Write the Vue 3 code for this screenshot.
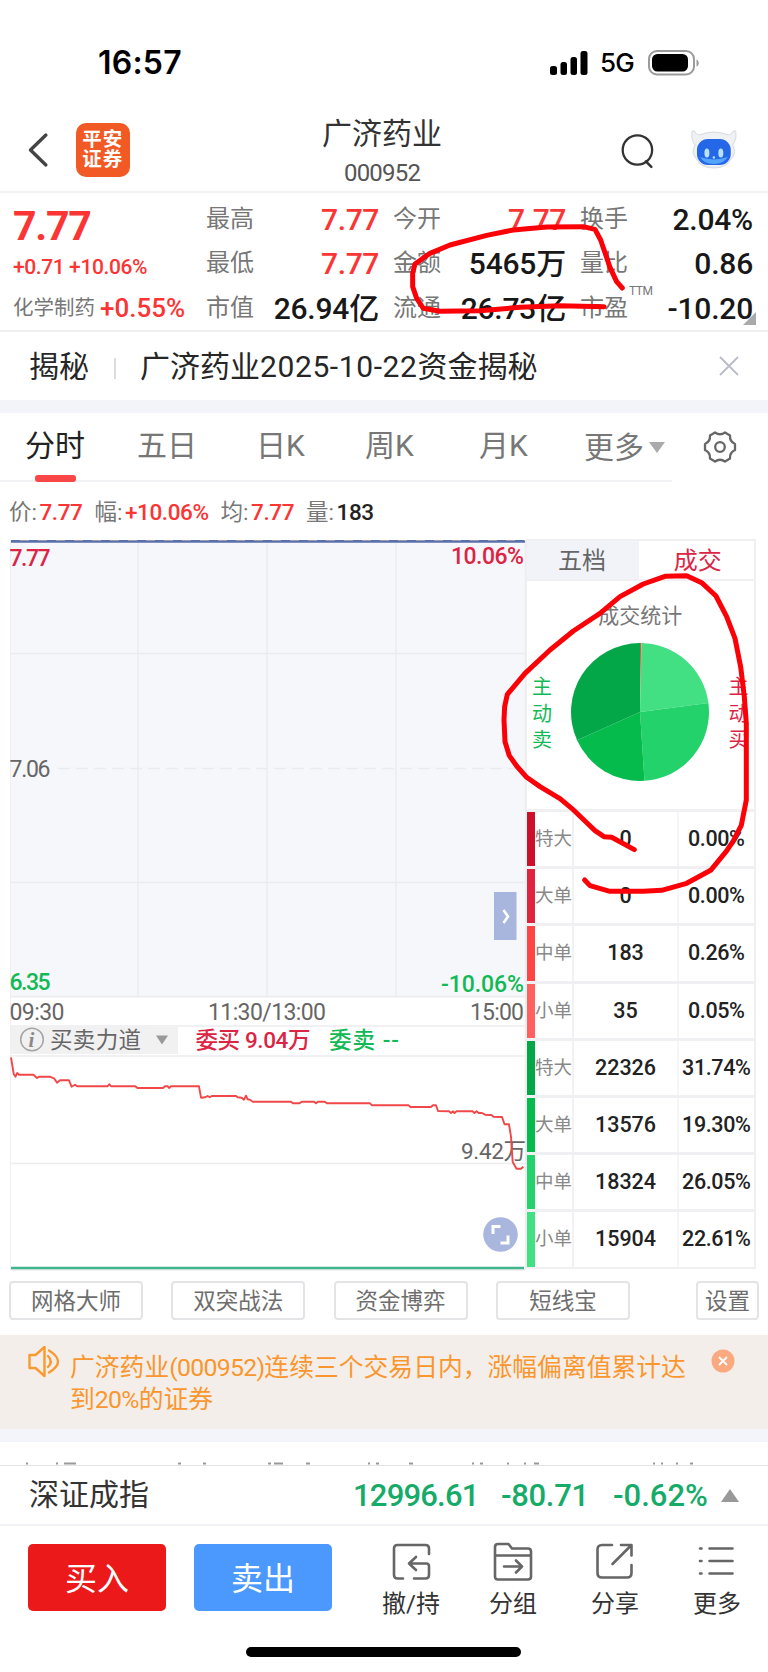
<template>
  <div class="page">
    <header class="status-bar">
      <span class="clock">16:57</span>
      <svg class="signal" width="38" height="24" viewBox="0 0 38 24">
        <rect x="0" y="15" width="7" height="9" rx="2.5" />
        <rect x="10.5" y="11" width="6.5" height="13" rx="2.5" />
        <rect x="20.5" y="6" width="6.5" height="18" rx="2.5" />
        <rect x="30.5" y="0" width="7" height="24" rx="2.5" />
      </svg>
      <span class="network">5G</span>
      <svg class="battery" width="52" height="26" viewBox="0 0 52 26">
        <rect x="1" y="1" width="45" height="23.5" rx="8" fill="none" stroke="#9a9a9a" stroke-width="2" />
        <rect x="4" y="4" width="36" height="17.5" rx="5.5" />
        <path d="M48.5 9.5c3 1 3 6 0 7z" fill="#9a9a9a" />
      </svg>
    </header>

    <nav class="nav-bar">
      <svg class="back" width="22" height="36" viewBox="0 0 22 36">
        <path d="M19 3L3.500 18L19 33" fill="none" stroke="#444" stroke-width="3.400" stroke-linecap="round" stroke-linejoin="round" />
      </svg>
      <div class="logo"><span>平安</span><span>证券</span></div>
      <div class="title">
        <div class="stock-name">广济药业</div>
        <div class="stock-code">000952</div>
      </div>
      <svg class="search" width="34" height="36" viewBox="0 0 34 36">
        <circle cx="16.500" cy="17" r="14.800" fill="none" stroke="#333" stroke-width="2.300" />
        <path d="M25 28.500L30.500 34" stroke="#333" stroke-width="2.600" stroke-linecap="round" />
      </svg>
      <svg class="robot" width="48" height="40" viewBox="0 0 48 40">
        <path d="M2 3q1-3 3 0q2 4 7 2q12-4 24 0q5 2 7-2q2-3 3 0q1 7-3 13q4 8-1 13q-5 10-18 10T6 29q-5-5-1-13Q1 10 2 3z" fill="#f0f1f4" stroke="#dcdee3" stroke-width="1.200" />
        <rect x="7" y="10" width="34" height="26" rx="11" fill="#2468e8" />
        <path d="M10 28q4 7 14 7t14-7q-14 5-28 0z" fill="#55a4fb" />
        <ellipse cx="17" cy="24" rx="2.500" ry="4.600" fill="#b9e2ff" />
        <ellipse cx="31" cy="24" rx="2.500" ry="4.600" fill="#b9e2ff" />
        <circle cx="24" cy="28.500" r="1.200" fill="#b9e2ff" />
      </svg>
    </nav>

    <section class="quote">
      <div class="price-block">
        <div class="price">7.77</div>
        <div class="change">+0.71 +10.06%</div>
        <div class="sector">化学制药<b>+0.55%</b></div>
      </div>
      <div v-for="(col, c) in quoteColumns" :key="c" class="quote-col">
        <div v-for="item in col" :key="item.label" class="quote-item">
          <span class="q-label">{{ item.label }}<sup v-if="item.sup">{{ item.sup }}</sup></span>
          <span class="q-value" :class="{ up: item.up }">{{ item.value }}</span>
        </div>
      </div>
      <i class="corner"></i>
    </section>

    <section class="reveal">
      <span>揭秘</span>
      <i class="reveal-line"></i>
      <span class="reveal-text">广济药业<em>2025-10-22</em>资金揭秘</span>
      <svg width="20" height="20" viewBox="0 0 20 20">
        <path d="M1 1L19 19M19 1L1 19" stroke="#b9bbc9" stroke-width="1.800" />
      </svg>
    </section>

    <nav class="tabs">
      <div v-for="tab in tabs" :key="tab" class="tab" :class="{ active: tab === activeTab }" @click="activeTab = tab">{{ tab }}</div>
      <div class="tab more">更多<i></i></div>
      <svg class="gear" width="34" height="34" viewBox="0 0 34 34" fill="none" stroke="#666" stroke-width="2.300" stroke-linejoin="round">
        <path d="M12 2.500Q17 6 22 2.500L27 5.500Q26.500 11.500 32 14V20Q26.500 22.500 27 28.500L22 31.500Q17 28 12 31.500L7 28.500Q7.500 22.500 2 20V14Q7.500 11.500 7 5.500Z" />
        <circle cx="17" cy="17" r="4.800" />
      </svg>
    </nav>

    <div class="tick-info">
      <span v-for="t in tickInfo" :key="t.label" class="tick">{{ t.label }}:<b :class="{ up: t.up }">{{ t.value }}</b></span>
    </div>

    <main class="market">
      <div class="charts">
        <svg class="chart" width="516" height="731" viewBox="0 0 516 731">
          <rect x="0" y="1" width="515" height="457" fill="#f6f7fb" />
          <g stroke="#eaebef" stroke-width="1.300">
            <path d="M128 3V457M257 3V457M386 3V457M0 113.500H515M0 342.500H515" />
            <path d="M48 228.500H515" stroke-dasharray="12 6" />
          </g>
          <path d="M0 0V730M515.500 0V730M0 456.500H515M0 486H515M0 516H515M0 623.500H515M0 730H515" stroke="#ededf0" stroke-width="1.500" />
          <path d="M1 1.300H515" stroke="#5a70aa" stroke-width="3" />
          <path d="M10 0.500H515" stroke="#9d9dab" stroke-width="1" stroke-dasharray="9 9" />

          <g class="axis">
            <text x="-0.5" y="25.500" textLength="41" class="red">7.77</text>
            <text x="441" y="23.500" textLength="73" class="red">10.06%</text>
            <text x="-0.5" y="237" textLength="41">7.06</text>
            <text x="-0.5" y="449.500" textLength="41" class="green">6.35</text>
            <text x="431" y="451.500" textLength="83" class="green">-10.06%</text>
            <text x="-0.5" y="479.500" textLength="55">09:30</text>
            <text x="198" y="479.500" textLength="118">11:30/13:00</text>
            <text x="460" y="479.500" textLength="54">15:00</text>
          </g>

          <rect x="0" y="487" width="168" height="27" fill="#f1f1f2" />
          <circle cx="22" cy="499.500" r="11.300" fill="none" stroke="#a5a5a5" stroke-width="1.500" />
          <text x="18.500" y="507" class="info">i</text>
          <path d="M146 495.500H158L152 504.500Z" fill="#999" />
          <g class="indicator">
            <text x="40" y="507.500" textLength="91">买卖力道</text>
            <text x="185.500" y="507.500" textLength="115" class="red strong">委买 9.04万</text>
            <text x="319" y="507.500" textLength="70" class="green strong">委卖 --</text>
            <text x="451" y="619" textLength="65">9.42万</text>
          </g>

          <polyline :points="forceLine" transform="translate(0 516)" fill="none" stroke="#f04848" stroke-width="1.900" stroke-linejoin="round" />
          <path d="M1 728H514" stroke="#40b58a" stroke-width="2.600" />

          <rect x="484" y="352" width="22.500" height="48" fill="#a8b5dd" />
          <path d="M493.500 370L498 376.500L493.500 383" fill="none" stroke="#fff" stroke-width="2.600" />
          <circle cx="490.500" cy="694.500" r="17.300" fill="#a9b7df" />
          <path d="M483 694V686.500H490.500M490.500 703H498V695.500" fill="none" stroke="#fff" stroke-width="3" />
        </svg>
      </div>

      <aside class="deals">
        <div class="deal-tabs">
          <span>五档</span>
          <span class="on">成交</span>
        </div>
        <div class="pie-area">
          <div class="side sell">主动卖</div>
          <div class="pie-box">
            <div class="pie-title">成交统计</div>
            <svg width="138" height="138" viewBox="-69 -69 138 138">
              <path v-for="s in slices" :key="s.color" :d="s.d" :fill="s.color" />
            </svg>
          </div>
          <div class="side buy">主动买</div>
        </div>
        <div class="deal-table">
          <div v-for="(row, i) in deals" :key="i" class="deal-row">
            <i :style="{ background: row.color }"></i>
            <span class="kind">{{ row.kind }}</span>
            <span class="count">{{ row.count }}</span>
            <span class="percent">{{ row.percent }}</span>
          </div>
        </div>
      </aside>
    </main>

    <div class="tools">
      <button v-for="tool in tools" :key="tool">{{ tool }}</button>
      <button class="setting">设置</button>
    </div>

    <section class="notice">
      <svg width="32" height="33" viewBox="0 0 32 33" fill="none" stroke="#f99a30" stroke-width="2.400" stroke-linejoin="round">
        <path d="M1.500 9H7.500L16.500 1V30L7.500 22H1.500Z" />
        <path d="M20 10Q25.500 15.500 20 21M21 4.500Q39 15.500 21 26.500" stroke-linecap="round" />
      </svg>
      <p>广济药业<em>(000952)</em>连续三个交易日内，涨幅偏离值累计达<br />到<em>20%</em>的证券</p>
      <svg class="notice-close" width="24" height="24" viewBox="0 0 24 24">
        <circle cx="12" cy="12" r="11.500" fill="#fba981" />
        <path d="M8 8L16 16M16 8L8 16" stroke="#fff" stroke-width="1.800" />
      </svg>
    </section>

    <!-- next section, hidden behind the index bar except for its top edge -->
    <div class="peek">
      <svg width="768" height="3" viewBox="0 0 768 3">
        <path d="M26 1.500h2M56 1.500h2M64 1.500h12M178 1.500h3M203 1.500h3M268 1.500h3M274 1.500h9M306 1.500h4M368 1.500h2M376 1.500h3M409 1.500h4M472 1.500h2M480 1.500h3M507 1.500h2M524 1.500h2M534 1.500h5M653 1.500h2M661 1.500h2M676 1.500h2M690 1.500h3" stroke="#999" stroke-width="2" />
      </svg>
    </div>

    <section class="index-bar">
      <span class="index-name">深证成指</span>
      <span class="index-num a">12996.61</span>
      <span class="index-num b">-80.71</span>
      <span class="index-num c">-0.62%</span>
      <i></i>
    </section>

    <footer class="actions">
      <button class="trade buy-btn">买入</button>
      <button class="trade sell-btn">卖出</button>
      <div v-for="a in actions" :key="a.name" class="action">
        <svg width="40" height="40" viewBox="0 0 40 40" fill="none" stroke="#666" stroke-width="2.600" stroke-linecap="round" stroke-linejoin="round">
          <path :d="a.icon" />
        </svg>
        <span>{{ a.name }}</span>
      </div>
    </footer>
    <div class="home-bar"></div>

    <!-- hand-drawn marks -->
    <svg class="marks" width="768" height="1672" viewBox="0 0 768 1672" fill="none" stroke="#fb0007" stroke-linecap="round" stroke-linejoin="round">
      <polyline transform="translate(380 190) scale(0.3333)" stroke-width="15" points="672,350 540,347 420,352 300,362 180,364 130,355 110,325 98,290 98,250 105,222 150,190 210,165 320,136 400,120 500,111 610,110 645,118 662,150 690,232 710,275 727,294" />
      <polyline transform="translate(500 530) scale(0.3333)" stroke-width="15" points="403,959 335,922 312,920 285,902 262,880 215,835 180,806 120,770 80,742 50,708 28,677 15,635 12,570 14,530 22,493 75,430 150,360 220,303 300,250 360,200 430,162 495,139 560,137 605,158 648,198 680,260 705,325 722,410 733,500 739,580 739,810 724,886 700,933 680,963 632,1021 560,1060 485,1081 430,1084 330,1084 270,1067 254,1050" />
    </svg>
  </div>
</template>

<script setup>
import { ref, computed } from 'vue';

const quoteColumns = [
  [
    { label: '最高', value: '7.77', up: true },
    { label: '最低', value: '7.77', up: true },
    { label: '市值', value: '26.94亿' },
  ],
  [
    { label: '今开', value: '7.77', up: true },
    { label: '金额', value: '5465万' },
    { label: '流通', value: '26.73亿' },
  ],
  [
    { label: '换手', value: '2.04%' },
    { label: '量比', value: '0.86' },
    { label: '市盈', value: '-10.20', sup: 'TTM' },
  ],
];

const tabs = ['分时', '五日', '日K', '周K', '月K'];
const activeTab = ref('分时');

const tickInfo = [
  { label: '价', value: '7.77', up: true },
  { label: '幅', value: '+10.06%', up: true },
  { label: '均', value: '7.77', up: true },
  { label: '量', value: '183' },
];

const forceLine =
  '1,1.3 3.8,18.3 5.5,20.7 7.2,17 9,18.7 23.4,18.7 27,22 29,20.7 40,20.7 44.4,22.7 47,26.7 50,24.3 59,24.3 61.6,30.7 65,28.7 67,30.3 97.4,30.3 99.5,28.3 101,30.3 125.3,30.3 127.4,32 153,32 155,30.3 157.7,30.3 159,32 161,30.3 189,30.3 191,41.7 195,41.3 197.6,40 199.7,41.3 201.8,40 226,40 227.6,41.3 231.7,41.7 234,43.7 236,39.7 237.6,43.3 240,43.7 242.8,45.7 281,45.7 283,47.3 289.6,47.3 291.7,45.7 304,45.7 306,47.3 308,45.7 314.7,45.7 317,47.3 360,47.3 362,49.3 398.4,49.3 400.5,51 421,51 423,49.3 426,49.3 428,55 439,55.3 441,57 443,55.3 444.5,57 446.6,55.3 462.5,55.3 464.5,57 466.6,55.3 468.7,57 472,57 475,58.7 481.4,59 483.5,60.7 492,61 494.5,68.3 499,68.3 501,80.7 502.7,106 506.5,112.7 511,112.7 513.4,110.7';

const deals = [
  { kind: '特大', count: 0, percent: '0.00%', color: '#cc102b' },
  { kind: '大单', count: 0, percent: '0.00%', color: '#e0233f' },
  { kind: '中单', count: 183, percent: '0.26%', color: '#ff4444' },
  { kind: '小单', count: 35, percent: '0.05%', color: '#ff6060' },
  { kind: '特大', count: 22326, percent: '31.74%', color: '#04a747' },
  { kind: '大单', count: 13576, percent: '19.30%', color: '#04bb4c' },
  { kind: '中单', count: 18324, percent: '26.05%', color: '#24d26b' },
  { kind: '小单', count: 15904, percent: '22.61%', color: '#42e083' },
];

// clockwise from the top: buys first, then sells from small to large
const slices = computed(() => {
  const order = [0, 1, 2, 3, 7, 6, 5, 4].map((i) => deals[i]).filter((d) => d.count > 0);
  const total = order.reduce((sum, d) => sum + d.count, 0);
  let angle = 0;
  return order.map((d) => {
    const from = angle;
    angle += (d.count / total) * Math.PI * 2;
    const r = 69;
    const p = (a) => `${(r * Math.sin(a)).toFixed(2)} ${(-r * Math.cos(a)).toFixed(2)}`;
    return { color: d.color, d: `M0 0L${p(from)}A${r} ${r} 0 0 1 ${p(angle)}Z` };
  });
});

const tools = ['网格大师', '双突战法', '资金博弈', '短线宝'];

const actions = [
  { name: '撤/持', icon: 'M12 37.500H6.500Q3 37.500 3 34V7.500Q3 4 6.500 4H34.500Q38 4 38 7.500V13M23 37.500H34.500Q38 37.500 38 34V25Q38 22.500 35 22.500H18M25 16L18 22.500L25 29' },
  { name: '分组', icon: 'M2 14.500H38M2 6Q2 3 5 3H15.500L19 7.500H35Q38 7.500 38 10.500V35.500Q38 38.500 35 38.500H5Q2 38.500 2 35.500ZM11 25.500H29M23 19.500L29 25.500L23 31.500' },
  { name: '分享', icon: 'M17 4H7Q2.500 4 2.500 8.500V32Q2.500 36.500 7 36.500H32Q36.500 36.500 36.500 32V24M26 4H36.500V14.500M17.500 23L36 4.500' },
  { name: '更多', icon: 'M3 7.500H4.500M12.500 7.500H35.500M3 20H4.500M12.500 20H35.500M3 32.500H4.500M12.500 32.500H35.500' },
];
</script>

<style>
body {
  background: #fff;
}
</style>

<style scoped>
.page {
  position: relative;
  width: 768px;
  height: 1672px;
  overflow: hidden;
  background: #fff;
  color: #222;
  font-family: Roboto, 'Noto Sans CJK SC', sans-serif;
  box-sizing: border-box;
}

.page * {
  box-sizing: border-box;
}

button {
  padding: 0;
  font-family: inherit;
  background: #fff;
}

em,
i {
  font-style: normal;
}

.status-bar {
  display: flex;
  align-items: center;
  height: 97px;
  padding: 28px 67px 0 98px;
  color: #000;
}

.clock {
  width: 452px;
  font: 600 32px Inter, sans-serif;
  letter-spacing: 0.2px;
}

.network {
  width: 48px;
  margin-left: 12px;
  font: 500 26px Inter, sans-serif;
  letter-spacing: -0.7px;
}

.nav-bar {
  display: flex;
  align-items: center;
  height: 96px;
  padding: 0 30px 0 27px;
  border-bottom: 2px solid #f2f2f2;
}

.back {
  margin-top: 12px;
}

.logo {
  display: flex;
  flex-direction: column;
  justify-content: center;
  align-items: center;
  width: 54px;
  height: 54px;
  margin: 12px 0 0 27px;
  border-radius: 10px;
  background: #f15a24;
  color: #fff;
  font-size: 19.5px;
  font-weight: 700;
  letter-spacing: 1px;
  line-height: 20px;
}

.title {
  width: 200px;
  margin-left: 153px;
  padding-top: 18px;
  text-align: center;
}

.stock-name {
  color: #333;
  font-size: 30px;
  line-height: 40px;
}

.stock-code {
  color: #555;
  font-size: 24px;
  letter-spacing: -0.8px;
  line-height: 38px;
}

.search {
  margin: 13px 0 0 140px;
}

.robot {
  margin: 10px 0 0 35px;
}

.quote {
  position: relative;
  display: flex;
  height: 139px;
  padding: 4px 15px 0 13px;
  border-bottom: 2px solid #efeff2;
}

.price-block {
  width: 193px;
  color: #fb3434;
  white-space: nowrap;
}

.price {
  height: 55px;
  font-size: 41px;
  font-weight: 700;
  line-height: 59px;
  letter-spacing: -1.2px;
}

.change {
  height: 30px;
  font-size: 21px;
  font-weight: 500;
  line-height: 30px;
  letter-spacing: -0.4px;
}

.sector {
  display: flex;
  color: #777;
  font-size: 20.5px;
  line-height: 53px;
}

.sector b {
  margin-left: 5px;
  color: #fb3434;
  font-size: 26px;
  font-weight: 500;
}

.quote-col {
  width: 173px;
  margin-right: 14px;
}

.quote-col:nth-of-type(4) {
  margin-right: 0;
}

.quote-item {
  display: flex;
  justify-content: space-between;
  height: 44.300px;
  line-height: 45px;
  white-space: nowrap;
}

.q-label {
  position: relative;
  color: #777;
  font-size: 24px;
}

.q-label sup {
  position: absolute;
  left: 49px;
  top: -3px;
  font-size: 12px;
  letter-spacing: -0.4px;
  line-height: 16px;
}

.q-value {
  color: #181818;
  font-size: 30px;
  font-weight: 500;
  letter-spacing: -0.2px;
}

.q-value.up {
  color: #fb3434;
  letter-spacing: -0.4px;
}

.corner {
  position: absolute;
  right: 12px;
  bottom: 5px;
  border-left: 13px solid transparent;
  border-bottom: 13px solid #aaa;
}

.reveal {
  display: flex;
  align-items: center;
  height: 81px;
  padding: 0 29px;
  border-bottom: 13px solid #f3f4f9;
  color: #262626;
  font-size: 30px;
}

.reveal span {
  position: relative;
  top: -2px;
}

.reveal-line {
  width: 2px;
  height: 21px;
  margin: 4px 24px 0 25px;
  background: #ddd;
}

.reveal-text em {
  letter-spacing: 0.6px;
}

.reveal svg {
  margin-left: auto;
}

.tabs {
  display: flex;
  align-items: center;
  height: 69px;
  padding-left: 25px;
  background: linear-gradient(#f1f1f3, #f1f1f3) 0 100% / 672px 2px no-repeat;
  color: #777;
  font-size: 30px;
}

.tab {
  position: relative;
  width: 112px;
  height: 69px;
  line-height: 66px;
}

.tab:nth-child(2) {
  width: 119px;
}

.tab:nth-child(3) {
  width: 109px;
}

.tab:nth-child(4) {
  width: 114px;
}

.tab:nth-child(5) {
  width: 105px;
}

.tab.active {
  color: #222;
}

.tab.active::after {
  content: '';
  position: absolute;
  left: 10px;
  bottom: 0;
  width: 41px;
  height: 7px;
  border-radius: 3px;
  background: #f94646;
}

.more {
  display: flex;
  align-items: center;
  width: 119px;
}

.more i {
  margin-left: 5px;
  border: 8px solid transparent;
  border-top: 11px solid #aaa;
  border-bottom: 0;
}

.gear {
  margin-top: -2px;
}

.tick-info {
  display: flex;
  gap: 12px;
  height: 58px;
  padding-left: 9px;
  color: #777;
  font-size: 22.5px;
  line-height: 60px;
}

.tick b {
  margin-left: 2.500px;
  color: #222;
  font-weight: 500;
  letter-spacing: -0.4px;
}

.tick b.up {
  color: #fb3434;
}

.market {
  display: flex;
  height: 731px;
  padding-left: 10px;
}

.charts {
  width: 516px;
}

.chart {
  display: block;
}

.axis,
.indicator {
  fill: #666;
  font-size: 23px;
}

.axis .red,
.indicator .red {
  fill: #dc2445;
}

.axis .green,
.indicator .green {
  fill: #12b954;
}

.axis .red,
.axis .green {
  font-weight: 500;
}

.indicator {
  font-size: 22.5px;
}

.strong {
  font-weight: 500;
}

.info {
  fill: #888;
  font: italic 700 21px 'Liberation Serif', serif;
}

.deals {
  width: 229.500px;
  height: 730px;
  margin-top: -1px;
  border: 2px solid #f0f0f2;
  border-left: 1px solid #f0f0f2;
}

.deal-tabs {
  display: flex;
  height: 40px;
  border-bottom: 2px solid #f0f0f2;
  font-size: 24px;
  line-height: 41px;
  text-align: center;
}

.deal-tabs span {
  width: 112px;
  padding-right: 2px;
  background: #f2f3f8;
  color: #666;
}

.deal-tabs .on {
  flex: 1;
  padding: 0 0 0 3px;
  background: #fff;
  color: #dc2445;
}

.pie-area {
  display: flex;
  justify-content: space-between;
  height: 228px;
  padding: 0 5px;
}

.side {
  width: 20px;
  padding-top: 93px;
  font-size: 20px;
  line-height: 26.500px;
}

.sell {
  color: #12b954;
}

.buy {
  color: #dc2445;
}

.pie-box {
  width: 138px;
}

.pie-title {
  height: 62px;
  padding: 20px 0 0 27px;
  color: #777;
  font-size: 21px;
  line-height: 30px;
}

.deal-row {
  display: grid;
  grid-template-columns: 8px 39px 105px 1fr;
  height: 57.200px;
  border-top: 3px solid #f0f0f2;
  line-height: 54px;
  text-align: center;
}

.kind {
  border-right: 2px solid #f2f2f4;
  color: #888;
  font-size: 18.5px;
  white-space: nowrap;
}

.count,
.percent {
  color: #222;
  font-size: 21.5px;
  font-weight: 500;
}

.count {
  border-right: 2px solid #f6f6f7;
}

.percent {
  letter-spacing: -0.4px;
}

.tools {
  display: flex;
  height: 64px;
  gap: 28.300px;
  padding: 10px 9px 0 9px;
}

.tools button {
  width: 134px;
  height: 39px;
  border: 2px solid #e4e4e6;
  border-radius: 4px;
  color: #6e6e6e;
  font-size: 22.5px;
  line-height: 34px;
}

.tools .setting {
  width: 63px;
  margin-left: auto;
}

.notice {
  display: flex;
  height: 107px;
  padding: 11px 33px 0 28px;
  border-bottom: 13px solid #f3f5fa;
  background: #f3eee9;
  color: #fa962e;
}

.notice p {
  margin: 6px 0 0 10px;
  font-size: 24.8px;
  line-height: 31.500px;
  white-space: nowrap;
}

.notice em {
  letter-spacing: -0.7px;
}

.notice-close {
  margin: 3px 0 0 auto;
}

.peek {
  display: flex;
  align-items: flex-end;
  height: 23px;
}

.index-bar {
  display: flex;
  align-items: center;
  height: 61px;
  padding-left: 29px;
  border-top: 1px solid #e4e4e6;
  border-bottom: 2px solid #f2f3f7;
  line-height: 62px;
}

.index-name {
  width: 324px;
  color: #333;
  font-size: 30px;
}

.index-num {
  padding-top: 2px;
  color: #16ab69;
  font-size: 31px;
  font-weight: 500;
  letter-spacing: -0.8px;
  white-space: nowrap;
}

.a {
  width: 148px;
}

.b {
  width: 112px;
  letter-spacing: -0.3px;
}

.c {
  width: 108px;
  letter-spacing: 0;
}

.index-bar i {
  border: 9px solid transparent;
  border-top: 0;
  border-bottom: 13px solid #999;
}

.actions {
  display: flex;
  height: 121px;
  padding: 18px 0 0 28px;
}

.trade {
  width: 138px;
  height: 67px;
  padding-top: 2px;
  margin-right: 28px;
  border: 0;
  border-radius: 5px;
  color: #fff;
  font-size: 32px;
  line-height: 67px;
}

.buy-btn {
  background: #ec191b;
}

.sell-btn {
  background: #4b99ff;
}

.action {
  display: flex;
  flex-direction: column;
  align-items: center;
  width: 102px;
  color: #333;
  font-size: 24px;
  line-height: 32px;
}

.action svg {
  margin: -3px 0 7px;
}

.home-bar {
  width: 275px;
  height: 10px;
  margin-left: 246px;
  border-radius: 5px;
  background: #000;
}

.marks {
  position: absolute;
  left: 0;
  top: 0;
  pointer-events: none;
}
</style>
